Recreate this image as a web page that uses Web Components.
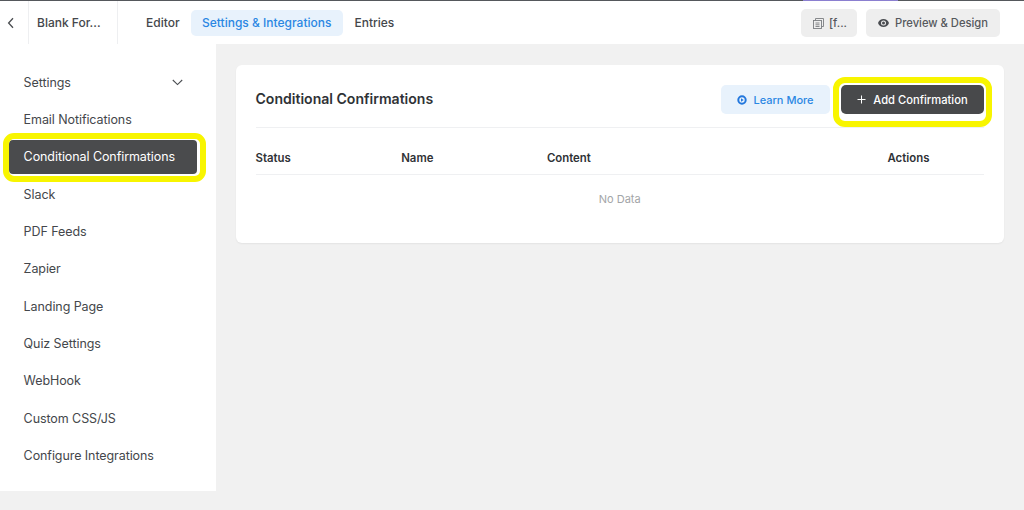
<!DOCTYPE html>
<html lang="en"><head><meta charset="utf-8"><title>Conditional Confirmations</title>
<style>
html,body{margin:0;padding:0;background:#f1f1f1;font-family:Inter,"Liberation Sans",sans-serif;}
body{width:1024px;height:510px;overflow:hidden;}
</style></head><body>
<app-shell>
  <top-bar slot="top"></top-bar>
  <side-nav slot="side">
    <nav-item chevron>Settings</nav-item>
    <nav-item>Email Notifications</nav-item>
    <nav-item active>Conditional Confirmations</nav-item>
    <nav-item>Slack</nav-item>
    <nav-item>PDF Feeds</nav-item>
    <nav-item>Zapier</nav-item>
    <nav-item>Landing Page</nav-item>
    <nav-item>Quiz Settings</nav-item>
    <nav-item>WebHook</nav-item>
    <nav-item>Custom CSS/JS</nav-item>
    <nav-item>Configure Integrations</nav-item>
  </side-nav>
  <confirm-card slot="main"></confirm-card>
</app-shell>
<script>
function def(name, html){
  customElements.define(name, class extends HTMLElement{
    constructor(){super();this.attachShadow({mode:'open'}).innerHTML=html;}
  });
}
def('app-shell',`<style>
:host{display:block;width:1024px;height:510px}
.body{display:flex;align-items:flex-start}
.main{flex:1;padding:21px 20px 0}
</style><slot name="top"></slot><div class="body"><slot name="side"></slot><div class="main"><slot name="main"></slot></div></div>`);

def('top-bar',`<style>
:host{display:block;height:44px;background:#fff;color:#3f4246;font-size:12px;font-weight:500}
.line{height:1px;background:#55585c}
.line i{display:block;width:95px;height:1px;margin-left:803px;background:#8b7fd0}
.row{display:flex;align-items:center;height:43px}
.back{width:28px;height:43px;display:flex;align-items:center;justify-content:center;border-right:1px solid #eeeff1}
.back svg{margin-left:-6px}
.name{width:89px;height:43px;display:flex;align-items:center;padding-left:8px;box-sizing:border-box;border-right:1px solid #eeeff1;color:#44474b}
.tabs{display:flex;align-items:center;margin-left:28px}
.tab{height:26px;display:flex;align-items:center;padding:0 11.5px;border-radius:5px;color:#44474b}
.tab.on{background:#e8f2fc;color:#2b87e3}
.tab:first-child{padding-left:0;padding-right:11px}
.right{margin-left:auto;display:flex;gap:9px;margin-right:24px;margin-top:1px}
.btn{height:28px;background:#eeeeee;border-radius:5px;display:flex;align-items:center;color:#55585c;font-size:11.2px;box-sizing:border-box}
.b1{width:56px;padding-left:12px;gap:5px}
.b2{width:134px;padding-left:12px;gap:6px}
</style>
<div class="line"><i></i></div>
<div class="row">
 <div class="back"><svg width="8" height="12" viewBox="0 0 8 12"><path d="M6 1.2 1.6 6 6 10.8" fill="none" stroke="#4a4d51" stroke-width="1.3"/></svg></div>
 <div class="name">Blank For...</div>
 <div class="tabs"><div class="tab">Editor</div><div class="tab on">Settings &amp; Integrations</div><div class="tab">Entries</div></div>
 <div class="right">
  <div class="btn b1"><svg width="11" height="11" viewBox="0 0 11 11" fill="none" stroke="#7a7d80" stroke-width=".9"><rect x=".5" y="2.5" width="8" height="8"/><path d="M2.500 2.500V.5h8v8H8.500M2.500 5h4M2.500 6.800h4M2.500 8.500h4"/></svg><span>[f...</span></div>
  <div class="btn b2"><svg width="11" height="8" viewBox="0 0 11 8"><path d="M5.500 0C3 0 .9 1.600 0 4c.9 2.400 3 4 5.500 4S10.100 6.400 11 4C10.100 1.600 8 0 5.500 0Zm0 6.500a2.500 2.500 0 1 1 0-5 2.500 2.500 0 0 1 0 5Zm0-4a1.500 1.500 0 1 0 0 3 1.500 1.500 0 0 0 0-3Z" fill="#4a4d51"/></svg><span>Preview &amp; Design</span></div>
 </div>
</div>`);

def('side-nav',`<style>
:host{display:flex;flex-direction:column;gap:3.3px;width:216px;height:447px;box-sizing:border-box;background:#fff;padding:21.4px 19px 0 9px;flex:none}
</style><slot></slot>`);

def('nav-item',`<style>
:host{display:flex;align-items:center;justify-content:space-between;height:34px;box-sizing:border-box;padding:0 14px 0 14.6px;font-size:12.5px;letter-spacing:-.08px;color:#44474b;border-radius:4px;white-space:nowrap;position:relative}
:host([active]){background:#4a4b4d;color:#fff}
:host([active])::after{content:"";position:absolute;top:-7px;bottom:-8.500px;left:-6px;right:-9px;border:6px solid #f8f500;border-radius:11px;pointer-events:none}
svg{display:none}
:host([chevron]) svg{display:block}
</style><span><slot></slot></span><svg width="11" height="7" viewBox="0 0 11 7"><path d="M.8 1 5.500 5.600 10.200 1" fill="none" stroke="#4a4d51" stroke-width="1.100"/></svg>`);

def('confirm-card',`<style>
:host{display:block;width:768px;height:178px;box-sizing:border-box;background:#fff;border-radius:6px;box-shadow:0 1px 2px rgba(0,0,0,.06);padding:20px 20px 0 19.500px;color:#2f3236}
.head{display:flex;align-items:center;height:29px;border-bottom:1px solid #eff0f2;padding-bottom:13px}
h2{margin:-2px 0 0;font-size:14.050px;font-weight:600;color:#2f3236;flex:1}
.btn{height:29px;border-radius:5px;display:flex;align-items:center;justify-content:center;font-weight:500;box-sizing:border-box}
.learn{width:109px;background:#e8f2fc;color:#2b87e3;gap:6px;margin-right:11px;font-size:11px}
.add{width:143px;background:#48494b;color:#fff;gap:7px;font-size:11.200px;position:relative}
.add::after{content:"";position:absolute;top:-8.500px;bottom:-12.500px;left:-8px;right:-8px;border:6px solid #f8f500;border-radius:12px;pointer-events:none}
.grid{display:grid;grid-template-columns:145.700px 145.700px 340.600px 97px;font-size:11.400px;font-weight:600;box-sizing:border-box;padding-top:22px;align-items:center;align-content:start;border-bottom:1px solid #eff0f2;height:47px}
.grid span{line-height:17px}
.empty{text-align:center;font-size:11px;color:#a3a5a8;margin-top:17px;line-height:15px}
</style>
<div class="head"><h2>Conditional Confirmations</h2>
 <div class="btn learn"><svg width="10" height="10" viewBox="0 0 10 10"><circle cx="5" cy="5" r="3.700" fill="none" stroke="#2277dd" stroke-width="2"/><path d="M4 3.300 6.700 5 4 6.700Z" fill="#2277dd"/></svg><span>Learn More</span></div>
 <div class="btn add"><svg width="9" height="9" viewBox="0 0 9 9"><path d="M4.500 .5v8M.5 4.500h8" stroke="#fff" stroke-width="1"/></svg><span>Add Confirmation</span></div>
</div>
<div class="grid"><span>Status</span><span>Name</span><span>Content</span><span>Actions</span></div>
<div class="empty">No Data</div>`);
</script>
</body></html>
